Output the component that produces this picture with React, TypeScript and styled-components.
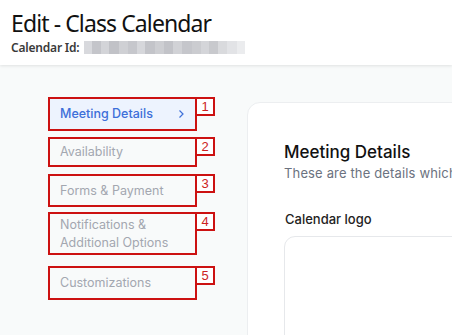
import styled, { createGlobalStyle } from "styled-components";

const GlobalStyle = createGlobalStyle`
  html, body {
    margin: 0;
    padding: 0;
    background: #f8fafa;
    overflow: hidden;
  }
  body {
    font-family: Inter, "Noto Sans", sans-serif;
    width: 452px;
    height: 335px;
  }
`;

const Header = styled.header`
  background: #ffffff;
  height: 65px;
  box-sizing: border-box;
  padding: 9px 11px 0;
  box-shadow: 0 1px 3px rgba(0, 0, 0, 0.1);
  position: relative;
  z-index: 1;
`;

const Title = styled.h1`
  margin: 0;
  font-family: "Noto Sans", sans-serif;
  font-weight: 400;
  font-size: 23px;
  letter-spacing: -0.9px;
  line-height: 29px;
  color: #111;
`;

const IdRow = styled.div`
  display: flex;
  align-items: center;
  gap: 5px;
  margin-top: 1px;
  font-family: "Noto Sans", sans-serif;
  font-size: 12px;
  font-weight: 600;
  letter-spacing: -0.2px;
  color: #3a3a3a;
`;

const Blurred = styled.div`
  display: flex;
  height: 13px;
`;

const BlurCell = styled.span<{ $shade: string; $w: number }>`
  display: block;
  width: ${(p) => p.$w}px;
  height: 100%;
  background: ${(p) => p.$shade};
`;

const Main = styled.main`
  display: flex;
  align-items: flex-start;
  padding: 32px 0 0 48px;
`;

const Sidebar = styled.nav`
  display: flex;
  flex-direction: column;
  width: 149px;
  flex-shrink: 0;
`;

const NavItem = styled.div<{ $active?: boolean; $h: number; $mt: number }>`
  position: relative;
  box-sizing: border-box;
  height: ${(p) => p.$h}px;
  margin-top: ${(p) => p.$mt}px;
  border: 2px solid #cc1111;
  padding: 0 10px;
  display: flex;
  align-items: center;
  justify-content: space-between;
  background: ${(p) => (p.$active ? "#edf3fe" : "transparent")};
  color: ${(p) => (p.$active ? "#3d6fd9" : "#a3a7b0")};
  font-size: 12.5px;
  font-weight: ${(p) => (p.$active ? 500 : 400)};
  line-height: 18px;
`;

const Tag = styled.span`
  position: absolute;
  top: -2px;
  left: 100%;
  width: 20px;
  height: 19px;
  box-sizing: border-box;
  border: 2px solid #cc1111;
  background: #fff;
  color: #cc2222;
  font-family: "Liberation Sans", sans-serif;
  font-size: 13px;
  line-height: 15px;
  text-align: center;
`;

const Card = styled.section`
  margin: 5px 0 0 50px;
  flex-shrink: 0;
  width: 420px;
  height: 400px;
  background: #fff;
  border: 1px solid #eceef0;
  border-radius: 13px;
  box-sizing: border-box;
  padding: 37px 0 0 36px;
`;

const CardTitle = styled.h2`
  margin: 0;
  font-size: 17px;
  font-weight: 500;
  line-height: 24px;
  color: #111;
`;

const CardSub = styled.p`
  margin: 0;
  font-size: 13px;
  line-height: 18px;
  letter-spacing: 0.15px;
  color: #6b7280;
  white-space: nowrap;
`;

const FieldLabel = styled.div`
  margin-top: 28px;
  font-size: 13px;
  font-weight: 500;
  line-height: 18px;
  color: #222;
  padding-left: 1px;
`;

const LogoBox = styled.div`
  margin-top: 8px;
  width: 300px;
  height: 200px;
  border: 1px solid #e6e8eb;
  border-radius: 11px;
`;

const Chevron = () => (
  <svg width="7" height="10" viewBox="0 0 7 10" fill="none">
    <path d="M1.5 1.5 5 5l-3.5 3.5" stroke="#3d6fd9" strokeWidth="1.2" />
  </svg>
);

const blur = [
  ["#d8d9dd", 8],
  ["#c4c5ca", 9],
  ["#d3d4d8", 8],
  ["#c1c2c7", 10],
  ["#cfd0d4", 9],
  ["#c6c7cc", 9],
  ["#d6d7db", 8],
  ["#c3c4c9", 10],
  ["#cdced2", 9],
  ["#c2c3c8", 9],
  ["#d1d2d6", 9],
  ["#c5c6cb", 10],
  ["#cbccd0", 9],
  ["#d4d5d9", 8],
  ["#c8c9cd", 9],
  ["#d9dadd", 9],
  ["#e2e3e6", 10],
  ["#ebecee", 8],
] as const;

const items = [
  { label: "Meeting Details", active: true, h: 34, mt: 0 },
  { label: "Availability", h: 30, mt: 6 },
  { label: "Forms & Payment", h: 33, mt: 7 },
  { label: "Notifications &\nAdditional Options", h: 43, mt: 5 },
  { label: "Customizations", h: 34, mt: 11 },
];

const Label = styled.span`
  white-space: pre-line;
`;

function App() {
  return (
    <>
      <GlobalStyle />
      <Header>
        <Title>Edit - Class Calendar</Title>
        <IdRow>
          Calendar Id:
          <Blurred>
            {blur.map(([c, w], i) => (
              <BlurCell key={i} $shade={c} $w={w} />
            ))}
          </Blurred>
        </IdRow>
      </Header>
      <Main>
        <Sidebar>
          {items.map((it, i) => (
            <NavItem key={it.label} $active={it.active} $h={it.h} $mt={it.mt}>
              <Label>{it.label}</Label>
              {it.active && <Chevron />}
              <Tag>{i + 1}</Tag>
            </NavItem>
          ))}
        </Sidebar>
        <Card>
          <CardTitle>Meeting Details</CardTitle>
          <CardSub>These are the details which will be shown</CardSub>
          <FieldLabel>Calendar logo</FieldLabel>
          <LogoBox />
        </Card>
      </Main>
    </>
  );
}

export default App;
